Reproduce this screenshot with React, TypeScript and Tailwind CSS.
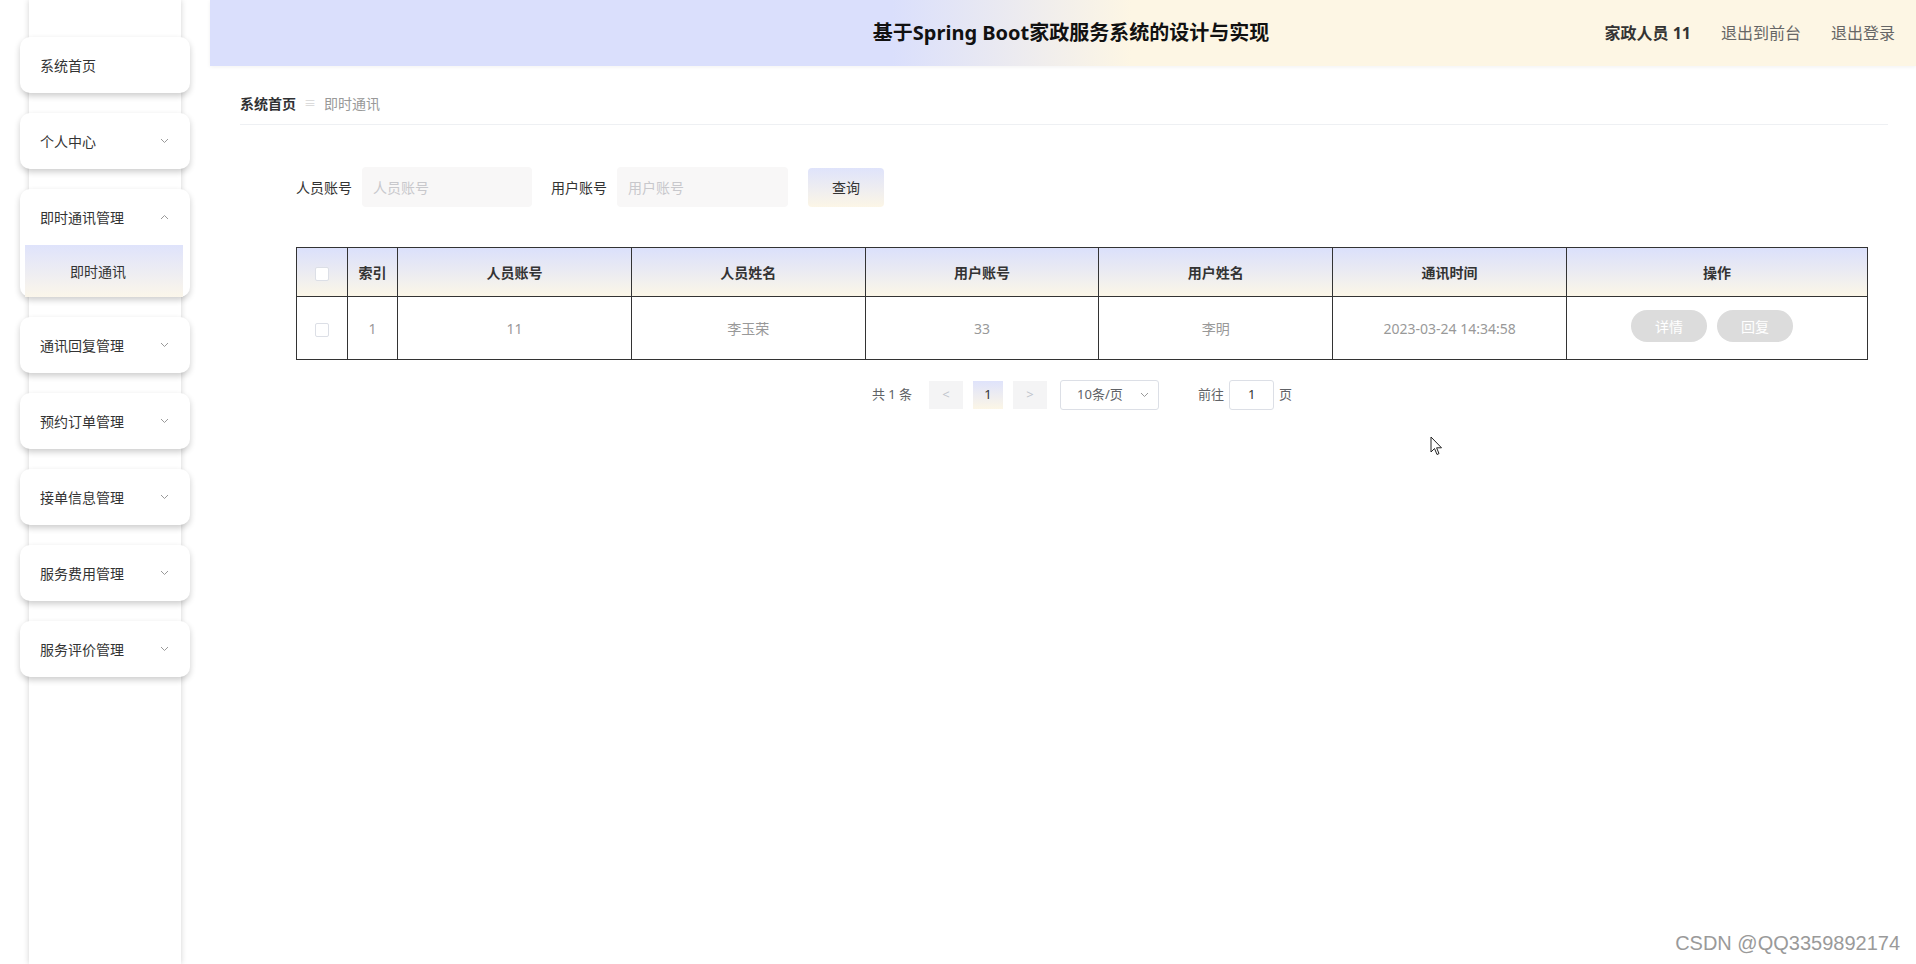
import React from 'react';

const menus = [
  { label: '系统首页', arrow: false },
  { label: '个人中心', arrow: true },
  { label: '即时通讯管理', arrow: true, open: true, children: ['即时通讯'] },
  { label: '通讯回复管理', arrow: true },
  { label: '预约订单管理', arrow: true },
  { label: '接单信息管理', arrow: true },
  { label: '服务费用管理', arrow: true },
  { label: '服务评价管理', arrow: true },
];

const columns = ['人员账号', '人员姓名', '用户账号', '用户姓名', '通讯时间'];
const row = ['11', '李玉荣', '33', '李明', '2023-03-24 14:34:58'];

const Chevron = ({ up }: { up?: boolean }) => (
  <svg width="9" height="6" viewBox="0 0 9 6" className="text-[#999]">
    <polyline
      points={up ? '1,5 4.5,1.5 8,5' : '1,1 4.5,4.5 8,1'}
      fill="none"
      stroke="currentColor"
      strokeWidth="1"
    />
  </svg>
);

const Checkbox = () => (
  <span className="inline-block w-[14px] h-[14px] bg-white border border-[#dcdfe6] rounded-[2px] align-middle" />
);

const App = () => {
  return (
    <div className='relative flex h-screen overflow-hidden bg-white text-[#333] font-["Noto_Sans","Noto_Sans_CJK_SC",sans-serif]'>
      {/* Sidebar */}
      <aside className="w-[210px] shrink-0">
        <div className="ml-[29px] w-[152px] h-full bg-white shadow-[0_0_6px_rgba(0,0,0,0.18)] pt-[37px]">
          {menus.map((m) => (
            <div
              key={m.label}
              className="-ml-[9px] w-[170px] mb-[20px] bg-white rounded-[10px] shadow-[0_3px_6px_rgba(0,0,0,0.2)]"
            >
              <div className="h-[56px] flex items-center justify-between pl-[20px] pr-[21px] text-[14px] text-[#333]">
                <span>{m.label}</span>
                {m.arrow && <Chevron up={m.open} />}
              </div>
              {m.open &&
                m.children?.map((c) => (
                  <div
                    key={c}
                    className="ml-[5px] mr-[7px] h-[52px] flex items-center pl-[45px] text-[14px] text-[#333] bg-gradient-to-b from-[#dfe3fb] to-[#fbf6ea]"
                  >
                    {c}
                  </div>
                ))}
            </div>
          ))}
        </div>
      </aside>

      {/* Main */}
      <main className="flex-1 flex flex-col">
        <header className="h-[66px] shrink-0 grid grid-cols-[1fr_auto_1fr] items-center pl-[16px] bg-[linear-gradient(90deg,#dadffc_40%,#fdf6e4_54%)] shadow-[0_1px_4px_rgba(0,0,0,0.06)]">
          <div />
          <h1 className="text-[20px] font-bold text-[#111] whitespace-nowrap">
            基于Spring Boot家政服务系统的设计与实现
          </h1>
          <div className="flex justify-end items-center gap-[30px] pr-[21px] text-[16px]">
            <span className="font-bold text-[#333]">家政人员 11</span>
            <span className="text-[#666]">退出到前台</span>
            <span className="text-[#666]">退出登录</span>
          </div>
        </header>

        <div className="pl-[30px] pr-[28px]">
          {/* Breadcrumb */}
          <div className="mt-[17px] h-[42px] flex items-center border-b border-[#eef0f3] text-[14px]">
            <span className="font-bold text-[#303133]">系统首页</span>
            <span className="mx-[8px] text-[12px] text-[#d5d5d5]">≡</span>
            <span className="text-[#999]">即时通讯</span>
          </div>

          <div className="ml-[56px] mr-[20px]">
            {/* Search form */}
            <div className="mt-[42px] flex items-center text-[14px]">
              <span className="text-[#333]">人员账号</span>
              <div className="ml-[10px] w-[170px] h-[40px] bg-[#f8f7f7] rounded-[4px] flex items-center pl-[11px] text-[#c8c8cc]">
                人员账号
              </div>
              <span className="ml-[19px] text-[#333]">用户账号</span>
              <div className="ml-[10px] w-[171px] h-[40px] bg-[#f8f7f7] rounded-[4px] flex items-center pl-[11px] text-[#c8c8cc]">
                用户账号
              </div>
              <button className="ml-[20px] w-[76px] h-[39px] rounded-[4px] bg-gradient-to-b from-[#dfe3fb] to-[#fcf6e6] text-[#333] text-[14px]">
                查询
              </button>
            </div>

            {/* Table */}
            <table className="mt-[40px] w-full table-fixed border-collapse border border-[#333] text-[14px]">
              <colgroup>
                <col className="w-[51px]" />
                <col className="w-[50px]" />
                <col />
                <col />
                <col />
                <col />
                <col />
                <col className="w-[301px]" />
              </colgroup>
              <thead>
                <tr className="h-[49px] bg-gradient-to-b from-[#dbe0fb] to-[#fcf7e7]">
                  <th className="border border-[#333] text-center">
                    <Checkbox />
                  </th>
                  <th className="border border-[#333] font-bold text-[#333]">索引</th>
                  {columns.map((c) => (
                    <th key={c} className="border border-[#333] font-bold text-[#333]">
                      {c}
                    </th>
                  ))}
                  <th className="border border-[#333] font-bold text-[#333]">操作</th>
                </tr>
              </thead>
              <tbody>
                <tr className="h-[63px]">
                  <td className="border border-[#333] text-center">
                    <Checkbox />
                  </td>
                  <td className="border border-[#333] text-center text-[#999]">1</td>
                  {row.map((v) => (
                    <td key={v} className="border border-[#333] text-center text-[#999]">
                      {v}
                    </td>
                  ))}
                  <td className="border border-[#333] text-center">
                    <div className="flex justify-center gap-[10px] -mt-[4px] pr-[10px]">
                      <button className="w-[76px] h-[32px] rounded-full bg-[#dcdcdc] text-white text-[14px]">
                        详情
                      </button>
                      <button className="w-[76px] h-[32px] rounded-full bg-[#dcdcdc] text-white text-[14px]">
                        回复
                      </button>
                    </div>
                  </td>
                </tr>
              </tbody>
            </table>

            {/* Pagination */}
            <div className="mt-[20px] flex justify-center items-center text-[13px] text-[#606266]">
              <span>共 1 条</span>
              <span className="ml-[17px] w-[34px] h-[28px] flex items-center justify-center bg-[#f4f4f5] text-[#c0c4cc]">
                &lt;
              </span>
              <span className="ml-[10px] w-[30px] h-[28px] flex items-center justify-center bg-gradient-to-b from-[#dfe3fb] to-[#fcf6e6] text-[#333]">
                1
              </span>
              <span className="ml-[10px] w-[34px] h-[28px] flex items-center justify-center bg-[#f4f4f5] text-[#c0c4cc]">
                &gt;
              </span>
              <div className="ml-[13px] w-[99px] h-[30px] border border-[#dcdfe6] rounded-[3px] flex items-center justify-between pl-[16px] pr-[9px]">
                <span>10条/页</span>
                <Chevron />
              </div>
              <span className="ml-[39px]">前往</span>
              <div className="ml-[5px] w-[45px] h-[30px] border border-[#dcdfe6] rounded-[3px] flex items-center justify-center text-[#333]">
                1
              </div>
              <span className="ml-[5px]">页</span>
            </div>
          </div>
        </div>
      </main>

      {/* Mouse pointer */}
      <svg
        className="absolute left-[1430px] top-[436px]"
        width="13"
        height="20"
        viewBox="0 0 13 20"
      >
        <path
          d="M1 1 L1 16 L4.5 12.5 L7 18.5 L9 17.6 L6.6 11.8 L11.5 11.8 Z"
          fill="white"
          stroke="#222"
          strokeWidth="1"
          strokeLinejoin="round"
        />
      </svg>

      {/* Watermark */}
      <span className='absolute right-[16px] bottom-[6px] text-[20px] text-[#9a9a9a] font-["Liberation_Sans",Arial,sans-serif]'>
        CSDN @QQ3359892174
      </span>
    </div>
  );
};

export default App;
